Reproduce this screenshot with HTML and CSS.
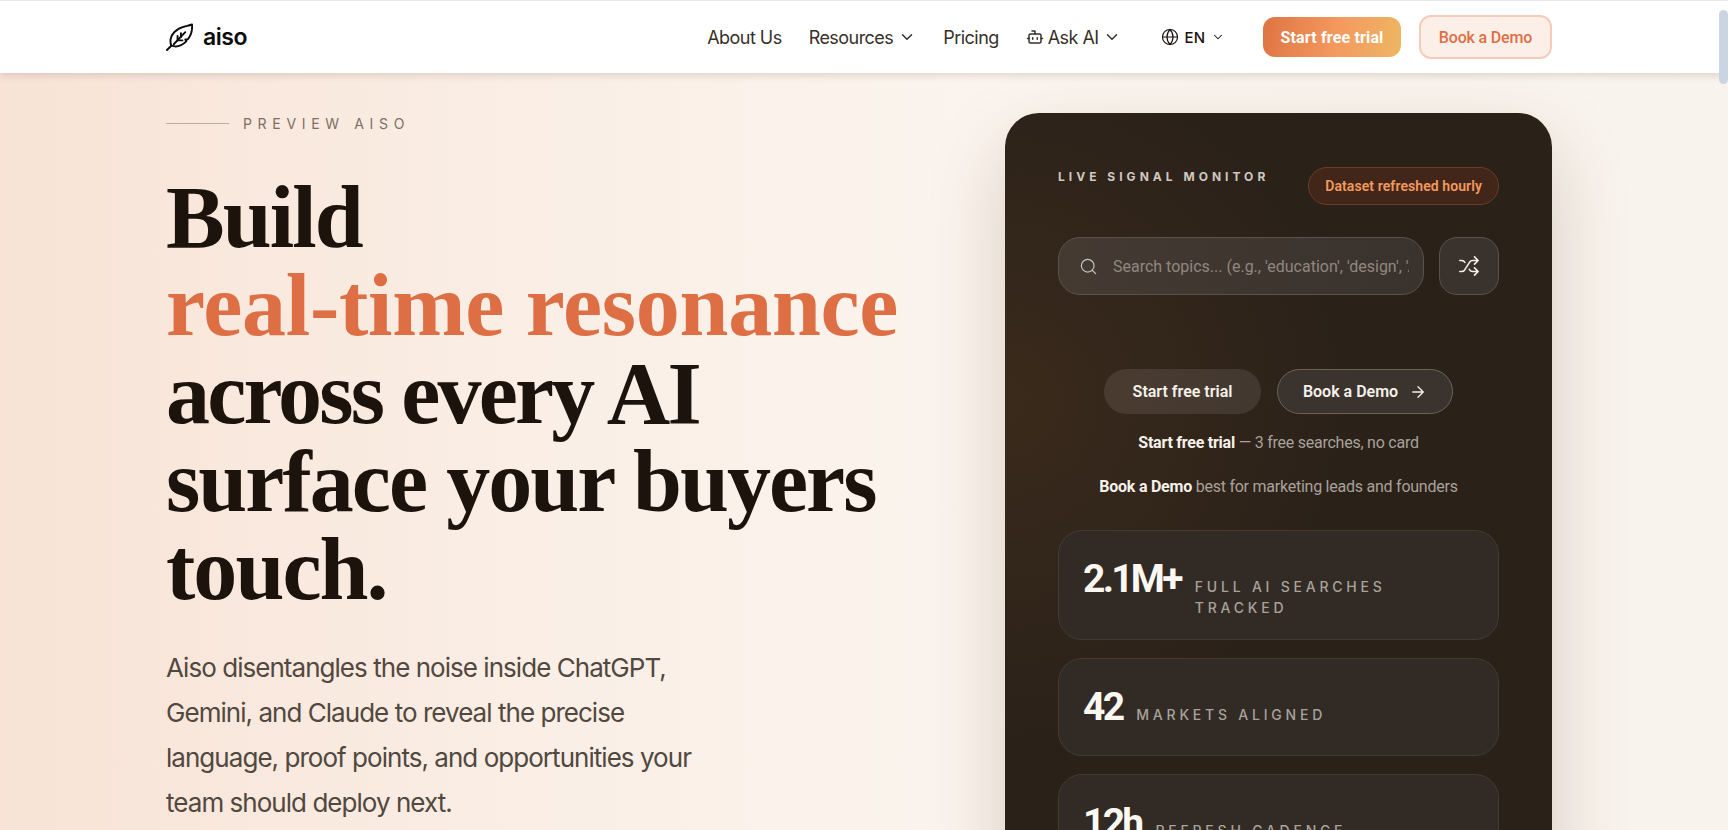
FILE: index.html
```html
<!DOCTYPE html>
<html lang="en">
<head>
    <meta charset="UTF-8">
    <meta name="viewport" content="width=device-width, initial-scale=1.0">
    <title>aiso</title>
    <link rel="stylesheet" href="styles.css">
</head>
<body>
    <div class="scroll-thumb"></div>
    <header class="nav">
        <div class="nav-inner">
            <a class="logo" href="#">
                <svg class="logo-icon" viewBox="0 0 28 30" fill="none" stroke="currentColor" stroke-width="1.7" stroke-linecap="round" stroke-linejoin="round">
                    <path d="M1 28 L5.500 23.500"/>
                    <path d="M5.500 23.500 C3 17 6 10 13 6 C17 3.500 23 3 27 1.500 C27.500 8 26 13 22.500 17 L20 17 L21 19 C16 24 10 25 5.500 23.500 Z"/>
                    <path d="M8 22 L20 9.500"/>
                    <path d="M12 18 L12 13.500 M15.500 14.500 L15.500 10.500 M12 18 L17 18"/>
                </svg>
                <span>aiso</span>
            </a>
            <nav class="nav-links">
                <a href="#">About Us</a>
                <a class="gap-chev" href="#">Resources
                    <svg class="chev" viewBox="0 0 24 24"><path d="m6 9 6 6 6-6"/></svg>
                </a>
                <a href="#">Pricing</a>
                <a class="ask" href="#">
                    <svg class="bot" viewBox="0 0 24 24"><path d="M12 8V4H8"/><rect x="4" y="8" width="16" height="12" rx="2"/><path d="M2 14h2M20 14h2M15 13v2M9 13v2"/></svg>
                    Ask AI
                    <svg class="chev" viewBox="0 0 24 24"><path d="m6 9 6 6 6-6"/></svg>
                </a>
            </nav>
            <div class="lang">
                <svg class="globe" viewBox="0 0 24 24"><circle cx="12" cy="12" r="10"/><path d="M12 2a14.500 14.500 0 0 0 0 20 14.500 14.500 0 0 0 0-20M2 12h20"/></svg>
                EN
                <svg class="chev small" viewBox="0 0 24 24"><path d="m6 9 6 6 6-6"/></svg>
            </div>
            <a class="btn-trial" href="#">Start free trial</a>
            <a class="btn-demo" href="#">Book a Demo</a>
        </div>
    </header>

    <main class="hero">
        <section class="hero-left">
            <div class="eyebrow"><span class="eyebrow-line"></span>PREVIEW AISO</div>
            <h1>Build<br><em>real-time resonance</em><br><span class="tight">across every AI</span><br>surface your buyers<br>touch.</h1>
            <p class="lead">Aiso disentangles the noise inside ChatGPT, Gemini, and Claude to reveal the precise language, proof points, and opportunities your team should deploy next.</p>
        </section>

        <aside class="monitor">
            <div class="monitor-head">
                <span class="monitor-title">LIVE SIGNAL MONITOR</span>
                <span class="pill">Dataset refreshed hourly</span>
            </div>
            <div class="search-row">
                <label class="search">
                    <svg viewBox="0 0 24 24"><circle cx="11" cy="11" r="8"/><path d="m21 21-4.300-4.300"/></svg>
                    <input type="text" placeholder="Search topics... (e.g., 'education', 'design', 'AI')">
                </label>
                <button class="shuffle" type="button">
                    <svg viewBox="0 0 24 24"><path d="m18 14 4 4-4 4M18 2l4 4-4 4M2 18h1.973a4 4 0 0 0 3.300-1.700l5.454-8.600a4 4 0 0 1 3.300-1.700H22M2 6h1.972a4 4 0 0 1 3.600 2.200M22 18h-6.041a4 4 0 0 1-3.300-1.800l-.359-.450"/></svg>
                </button>
            </div>
            <div class="cta-row">
                <a class="cta cta-fill" href="#">Start free trial</a>
                <a class="cta cta-line" href="#">Book a Demo
                    <svg viewBox="0 0 24 24"><path d="M5 12h14M12 5l7 7-7 7"/></svg>
                </a>
            </div>
            <p class="note"><b>Start free trial</b> — 3 free searches, no card</p>
            <p class="note"><b>Book a Demo</b> best for marketing leads and founders</p>
            <div class="stats">
                <div class="stat"><strong>2.1M+</strong><span>FULL AI SEARCHES TRACKED</span></div>
                <div class="stat"><strong>42</strong><span>MARKETS ALIGNED</span></div>
                <div class="stat"><strong>12h</strong><span>REFRESH CADENCE</span></div>
            </div>
        </aside>
    </main>
</body>
</html>
```

FILE: styles.css
```css
* {
    box-sizing: border-box;
}
body {
    margin: 0;
    font-family: Inter, "Liberation Sans", sans-serif;
    color: #1b130c;
    background: linear-gradient(90deg, #f8e3d6 0%, #faeee5 30%, #fbf5ef 60%, #f8f3ed 100%);
}
a {
    color: inherit;
    text-decoration: none;
}
svg {
    fill: none;
    stroke: currentColor;
    stroke-width: 2;
    stroke-linecap: round;
    stroke-linejoin: round;
}
.scroll-thumb {
    position: fixed;
    top: 10px;
    right: 0;
    z-index: 9;
    width: 9px;
    height: 74px;
    border-radius: 5px;
    background: #cbd5e1;
}

/* top bar */
.nav {
    position: sticky;
    top: 0;
    z-index: 5;
    height: 73px;
    background: #fff;
    border-top: 1px solid #e5e7eb;
    box-shadow: 0 2px 8px rgba(60, 40, 20, 0.16);
}
.nav-inner {
    display: flex;
    align-items: center;
    height: 100%;
    padding: 0 167px 0 166px;
    width: 1719px;
}
.logo {
    display: flex;
    align-items: center;
    gap: 10px;
    font-size: 23px;
    font-weight: 600;
    letter-spacing: -0.02em;
    color: #0d0d0d;
}
.logo-icon {
    width: 27px;
    height: 29px;
}
.nav-links {
    display: flex;
    align-items: center;
    gap: 27px;
    margin-left: auto;
    font-size: 18px;
    letter-spacing: -0.03em;
    color: #37302a;
}
.nav-links a {
    display: flex;
    align-items: center;
}
.gap-chev {
    gap: 5px;
}
.ask {
    gap: 4px;
}
.chev {
    width: 18px;
    height: 18px;
}
.chev.small {
    width: 14px;
    height: 14px;
    stroke-width: 1.800;
}
.bot {
    width: 18px;
    height: 18px;
}
.lang {
    display: flex;
    align-items: center;
    gap: 6px;
    margin-left: 40px;
    margin-right: 38px;
    font-size: 15px;
    font-weight: 500;
}
.globe {
    width: 18px;
    height: 18px;
    stroke-width: 1.600;
}
.btn-trial {
    display: flex;
    align-items: center;
    justify-content: center;
    width: 138px;
    height: 40px;
    border-radius: 12px;
    font-family: Roboto, sans-serif;
    font-size: 16px;
    font-weight: 700;
    letter-spacing: 0.01em;
    color: #fff;
    background: linear-gradient(100deg, #de7443, #f49a60 55%, #edb762);
}
.btn-demo {
    display: flex;
    align-items: center;
    justify-content: center;
    width: 133px;
    height: 44px;
    margin-left: 18px;
    border: 2px solid #f6cbb9;
    border-radius: 12px;
    font-family: Roboto, sans-serif;
    font-size: 16px;
    font-weight: 500;
    letter-spacing: -0.01em;
    color: #de6f45;
    background: #fbefe8;
}

/* hero */
.hero {
    display: flex;
    justify-content: space-between;
    align-items: flex-start;
    padding: 40px 167px 60px 166px;
    width: 1719px;
}
.hero-left {
    width: 760px;
    padding-top: 2px;
}
.eyebrow {
    display: flex;
    align-items: center;
    gap: 14px;
    font-size: 14px;
    letter-spacing: 0.405em;
    color: #7c6f64;
}
.eyebrow-line {
    width: 63px;
    height: 1px;
    background: #bdaea2;
}
h1 {
    margin: 42px 0 0;
    font-family: "Liberation Serif", serif;
    font-size: 88px;
    font-weight: 700;
    line-height: 88px;
    letter-spacing: -0.022em;
    color: #1b130c;
}
h1 em {
    font-style: normal;
    letter-spacing: -0.003em;
    color: #de6f45;
}
.tight {
    letter-spacing: -0.032em;
}
.lead {
    margin: 31px 0 0;
    width: 540px;
    font-size: 26px;
    line-height: 45px;
    letter-spacing: -0.037em;
    color: #51483f;
}

/* dark card */
.monitor {
    width: 547px;
    padding: 55px 53px 40px;
    border-radius: 34px;
    color: #f6f1ea;
    font-family: Roboto, sans-serif;
    background:
        radial-gradient(circle at 0% 36%, #3a2a1c 0%, rgba(58, 42, 28, 0) 48%),
        #2a2119;
    box-shadow: 0 30px 80px rgba(90, 50, 20, 0.2);
}
.monitor-head {
    display: flex;
    justify-content: space-between;
    align-items: flex-start;
}
.monitor-title {
    padding-top: 1px;
    font-family: Inter, sans-serif;
    font-size: 12px;
    font-weight: 700;
    letter-spacing: 0.335em;
    color: #cfc9c2;
}
.pill {
    display: flex;
    align-items: center;
    height: 38px;
    margin-top: -1px;
    padding: 0 16px;
    border: 1px solid #6d3d22;
    border-radius: 19px;
    font-size: 14px;
    font-weight: 600;
    letter-spacing: 0.006em;
    color: #f29a5e;
    background: #43261a;
}
.search-row {
    display: flex;
    gap: 15px;
    margin-top: 32px;
}
.search {
    display: flex;
    align-items: center;
    gap: 15px;
    flex: 1;
    height: 58px;
    padding: 0 14px 0 20px;
    border: 1px solid #5d524a;
    border-radius: 22px;
    color: #c8c2bb;
    background: linear-gradient(90deg, #443a32, #3a322d);
}
.search svg {
    flex: none;
    width: 19px;
    height: 19px;
    stroke-width: 1.500;
}
.search input {
    flex: 1;
    min-width: 0;
    border: 0;
    outline: 0;
    padding: 0;
    font-family: Roboto, sans-serif;
    font-size: 16px;
    color: #f6f1ea;
    background: transparent;
}
.search input::placeholder {
    color: #8f8880;
}
.shuffle {
    display: flex;
    align-items: center;
    justify-content: center;
    width: 60px;
    height: 58px;
    padding: 0;
    border: 1px solid #5d524a;
    border-radius: 18px;
    color: #f6f1ea;
    background: #3a322d;
}
.shuffle svg {
    width: 22px;
    height: 22px;
    stroke-width: 1.700;
}
.cta-row {
    display: flex;
    justify-content: center;
    gap: 16px;
    margin-top: 74px;
}
.cta {
    display: flex;
    align-items: center;
    justify-content: center;
    gap: 11px;
    height: 45px;
    border-radius: 23px;
    font-size: 16px;
    font-weight: 600;
    color: #f6f1ea;
}
.cta-fill {
    width: 157px;
    background: linear-gradient(90deg, #4a3b30, #423830);
}
.cta-line {
    width: 176px;
    border: 1px solid #6a625b;
    background: #3b332e;
}
.cta svg {
    width: 18px;
    height: 18px;
    stroke-width: 1.700;
}
.note {
    margin: 20px 0 0;
    text-align: center;
    font-size: 16px;
    line-height: 24px;
    letter-spacing: -0.015em;
    color: #a8a29b;
}
.cta-row + .note {
    margin-top: 17px;
}
.note b {
    font-weight: 700;
    color: #f6f1ea;
}
.stats {
    display: flex;
    flex-direction: column;
    gap: 18px;
    margin-top: 31px;
}
.stat {
    display: flex;
    align-items: baseline;
    gap: 14px;
    padding: 24px;
    border: 1px solid #423b34;
    border-radius: 24px;
    background: #322b25;
}
.stat strong {
    flex: none;
    font-size: 39px;
    font-weight: 700;
    line-height: 48px;
    letter-spacing: -0.07em;
    color: #fbf7f1;
}
.stat span {
    max-width: 220px;
    margin-bottom: -3px;
    font-family: Inter, sans-serif;
    font-size: 14px;
    font-weight: 500;
    line-height: 21px;
    letter-spacing: 0.27em;
    color: #a8a29b;
}
```
